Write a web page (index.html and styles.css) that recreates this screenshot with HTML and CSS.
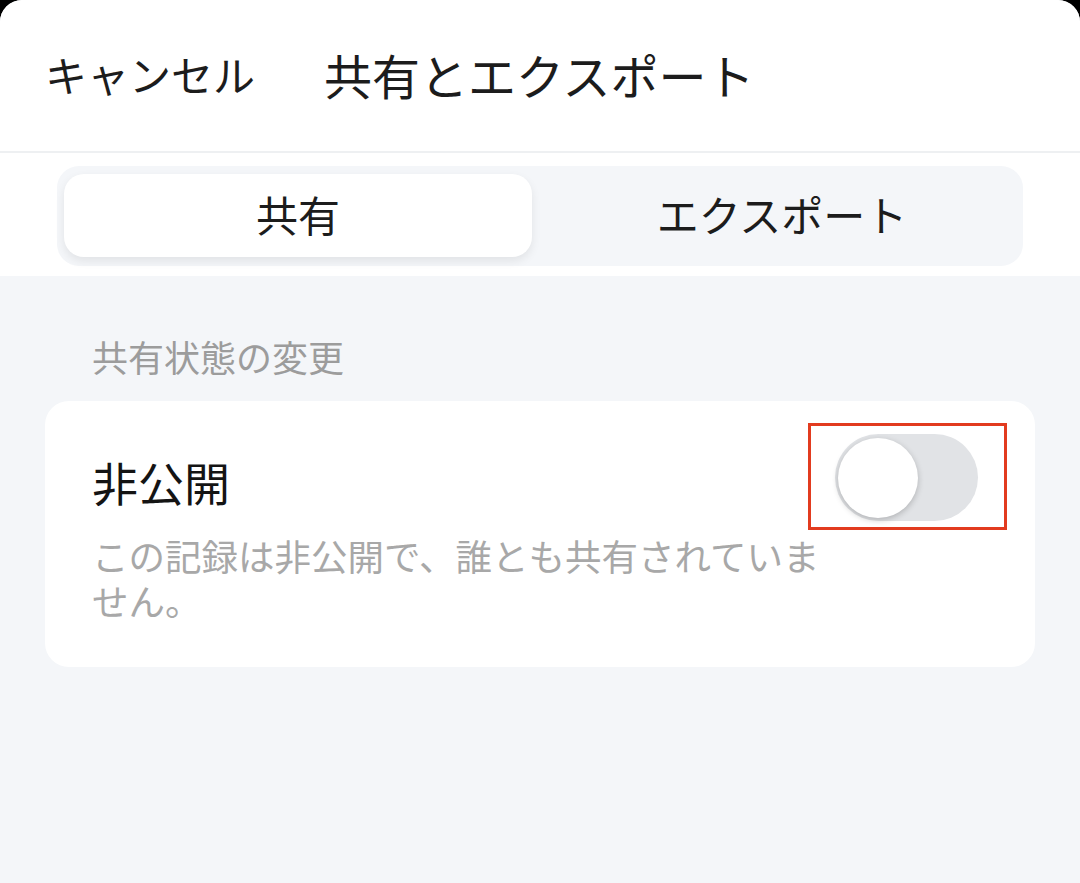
FILE: index.html
```html
<!DOCTYPE html>
<html lang="ja">
<head>
<meta charset="utf-8">
<title>共有とエクスポート</title>
<link rel="stylesheet" href="styles.css">
</head>
<body>
<div class="sheet">
  <header class="header">
    <span class="cancel">キャンセル</span>
    <span class="title">共有とエクスポート</span>
  </header>
  <div class="seg-wrap">
    <div class="seg">
      <div class="tab active">共有</div>
      <div class="tab">エクスポート</div>
    </div>
  </div>
  <main class="content">
    <div class="section-label">共有状態の変更</div>
    <div class="card">
      <div class="row">
        <div class="row-title">非公開</div>
        <div class="toggle">
          <span class="knob"></span>
          <span class="highlight"></span>
        </div>
      </div>
      <p class="desc">この記録は非公開で、誰とも共有されていません。</p>
    </div>
  </main>
</div>
</body>
</html>
```
FILE: styles.css
```css
* { box-sizing: border-box; }
html, body {
  margin: 0;
  padding: 0;
  background: #000;
}
body {
  font-family: "Noto Sans CJK JP", "Noto Sans", sans-serif;
  color: #1a1a1a;
  width: 1080px;
  height: 883px;
  overflow: hidden;
}
.sheet {
  height: 883px;
  background: #f4f6f9;
  border-radius: 22px 22px 0 0;
  overflow: hidden;
}
.header {
  height: 153px;
  background: #fff;
  border-bottom: 2px solid #eef0f2;
  display: flex;
  align-items: center;
  padding: 0 0 4px 45px;
  gap: 69px;
}
.cancel {
  font-size: 42px;
  line-height: 1;
  color: #1c1c1c;
}
.title {
  font-size: 48px;
  line-height: 1;
  color: #1c1c1c;
}
.seg-wrap {
  background: #fff;
  padding: 13px 57px 10px;
}
.seg {
  height: 100px;
  background: #f4f6f9;
  border-radius: 22px;
  padding: 8px 7px 9px;
  display: grid;
  grid-template-columns: 1fr 1fr;
  gap: 16px;
}
.tab {
  display: flex;
  align-items: center;
  justify-content: center;
  font-size: 42px;
  padding-bottom: 5px;
  color: #1c1c1c;
  border-radius: 20px;
}
.tab.active {
  background: #fff;
  box-shadow: 0 4px 10px rgba(0, 0, 0, 0.08);
}
.content {
  padding: 58px 45px 0;
}
.section-label {
  padding-left: 47px;
  font-size: 36px;
  line-height: 44px;
  color: #9c9c9c;
}
.card {
  margin-top: 23px;
  background: #fff;
  border-radius: 24px;
  padding: 33px 57px 44px 47px;
}
.row {
  display: flex;
  align-items: center;
  justify-content: space-between;
}
.row-title {
  font-size: 46px;
  line-height: 1;
  padding-top: 6px;
  color: #141414;
}
.toggle {
  position: relative;
  width: 143px;
  height: 87px;
  border-radius: 44px;
  background: #e1e3e6;
}
.knob {
  position: absolute;
  left: 3px;
  top: 4px;
  width: 80px;
  height: 80px;
  border-radius: 50%;
  background: #fff;
  box-shadow: 0 2px 6px rgba(0, 0, 0, 0.22);
}
.highlight {
  position: absolute;
  left: -27px;
  top: -11px;
  width: 199px;
  height: 107px;
  border: 3px solid #e23b1f;
}
.desc {
  margin: 12px 0 0;
  max-width: 746px;
  font-size: 36.5px;
  line-height: 45px;
  color: #a8a8a8;
}
```
